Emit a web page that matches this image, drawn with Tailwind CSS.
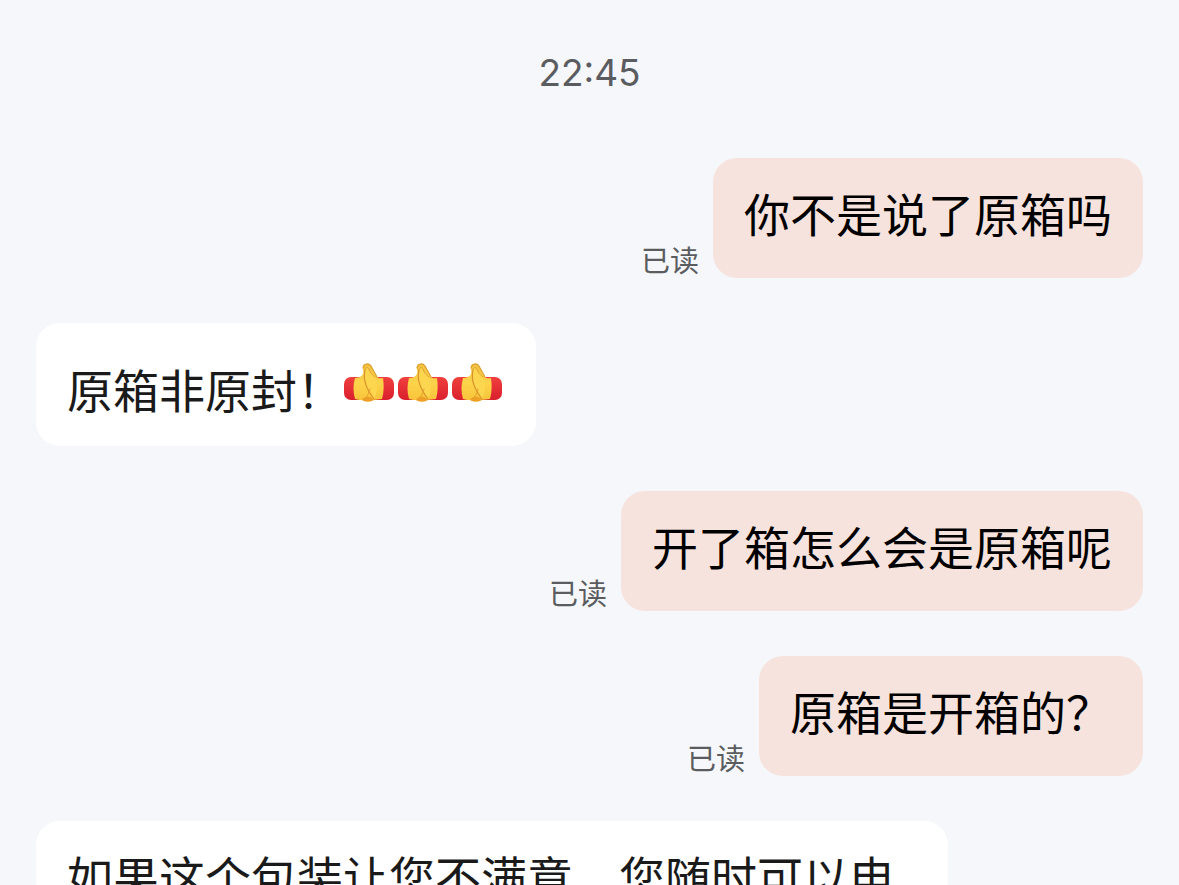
<!DOCTYPE html>
<html lang="zh-CN">
<head>
  <meta charset="UTF-8" />
  <meta name="viewport" content="width=device-width, initial-scale=1.0" />
  <title>聊天</title>
  <script src="https://cdn.jsdelivr.net/npm/@tailwindcss/browser@4"></script>
</head>
<body class="bg-[#f5f7fb] h-screen overflow-hidden font-['Inter','Noto_Sans_CJK_SC',sans-serif]">
  <!-- emoji -->
  <svg class="absolute w-0 h-0" xmlns="http://www.w3.org/2000/svg" aria-hidden="true">
    <defs>
      <linearGradient id="skin" x1="0" y1="0" x2="0" y2="1">
        <stop offset="0" stop-color="#f2c044" />
        <stop offset="0.5" stop-color="#fdd44a" />
        <stop offset="1" stop-color="#f8c23a" />
      </linearGradient>
      <linearGradient id="sleeve" x1="0" y1="0" x2="0" y2="1">
        <stop offset="0" stop-color="#f0403d" />
        <stop offset="1" stop-color="#d91f2d" />
      </linearGradient>
      <symbol id="fist" viewBox="0 0 54 40">
        <rect x="1" y="14" width="50" height="23" rx="7" fill="url(#sleeve)" />
        <path d="M12 15C15 15 18 14 20 11C21 8 19 5 20 3C21 0 26 0 28 3L34 14C36 16 38 15 40 15C41 22 41 29 39 36C36 36 33 37 30 37C27 39 23 39 21 37C18 37 15 37 12 36C10 29 10 22 12 15Z" fill="url(#skin)" />
        <path d="M19 37C23 32 27 33 31 37C27 39 22 39 19 37Z" fill="#ee9f26" />
        <path d="M20 5C21 0 26 0 28 3L34 14" fill="none" stroke="#d9a02c" stroke-width="1.2" stroke-linecap="round" />
        <path d="M22 7C22 5 24 4 25 6C27 11 34 14 34 22C34 28 33 32 31 36C26 31 22 24 22 16Z" fill="#fdd650" />
        <path d="M22 7C21 12 21 17 23 22C25 28 28 32 31 36" fill="none" stroke="#d9952a" stroke-width="1.2" stroke-linecap="round" />
        <path d="M22 7C22 4 25 4 26 6C27 9 29 12 32 14" fill="none" stroke="#dfa332" stroke-width="1" stroke-linecap="round" />
        <path d="M27 26C26 30 25 33 21 36" fill="none" stroke="#e3a02c" stroke-width="1" stroke-linecap="round" />
      </symbol>
    </defs>
  </svg>

  <main class="flex flex-col gap-[45px] px-9 pt-[50px]">
    <time class="block text-center text-[37px] leading-[46px] text-[#5b5c60] mb-[17px]">22:45</time>

    <div class="flex justify-end items-end gap-[14px]">
      <span class="text-[29px] leading-[32px] text-[#5b5c60]">已读</span>
      <p class="rounded-3xl bg-[#f7e3dd] px-[31px] pt-[25px] pb-[31px] text-[46px] leading-[64px] text-black">你不是说了原箱吗</p>
    </div>

    <div class="flex">
      <p class="flex items-center rounded-3xl bg-white px-[31px] pt-9 pb-[23px] text-[46px] leading-[64px] text-[#1a1a1a]">
        原箱非原封！
        <span class="flex pb-4" role="img" aria-label="赞">
          <svg class="w-[54px] h-10"><use href="#fist" /></svg>
          <svg class="w-[54px] h-10"><use href="#fist" /></svg>
          <svg class="w-[54px] h-10"><use href="#fist" /></svg>
        </span>
      </p>
    </div>

    <div class="flex justify-end items-end gap-[14px]">
      <span class="text-[29px] leading-[32px] text-[#5b5c60]">已读</span>
      <p class="rounded-3xl bg-[#f7e3dd] px-[31px] pt-[25px] pb-[31px] text-[46px] leading-[64px] text-black">开了箱怎么会是原箱呢</p>
    </div>

    <div class="flex justify-end items-end gap-[14px]">
      <span class="text-[29px] leading-[32px] text-[#5b5c60]">已读</span>
      <p class="rounded-3xl bg-[#f7e3dd] px-[31px] pt-[25px] pb-[31px] text-[46px] leading-[64px] text-black">原箱是开箱的？</p>
    </div>

    <div class="flex">
      <p class="w-full max-w-[912px] rounded-3xl bg-white px-[31px] pt-[25px] pb-[31px] text-[46px] leading-[64px] text-[#1a1a1a]">如果这个包装让您不满意，您随时可以电</p>
    </div>
  </main>
</body>
</html>
